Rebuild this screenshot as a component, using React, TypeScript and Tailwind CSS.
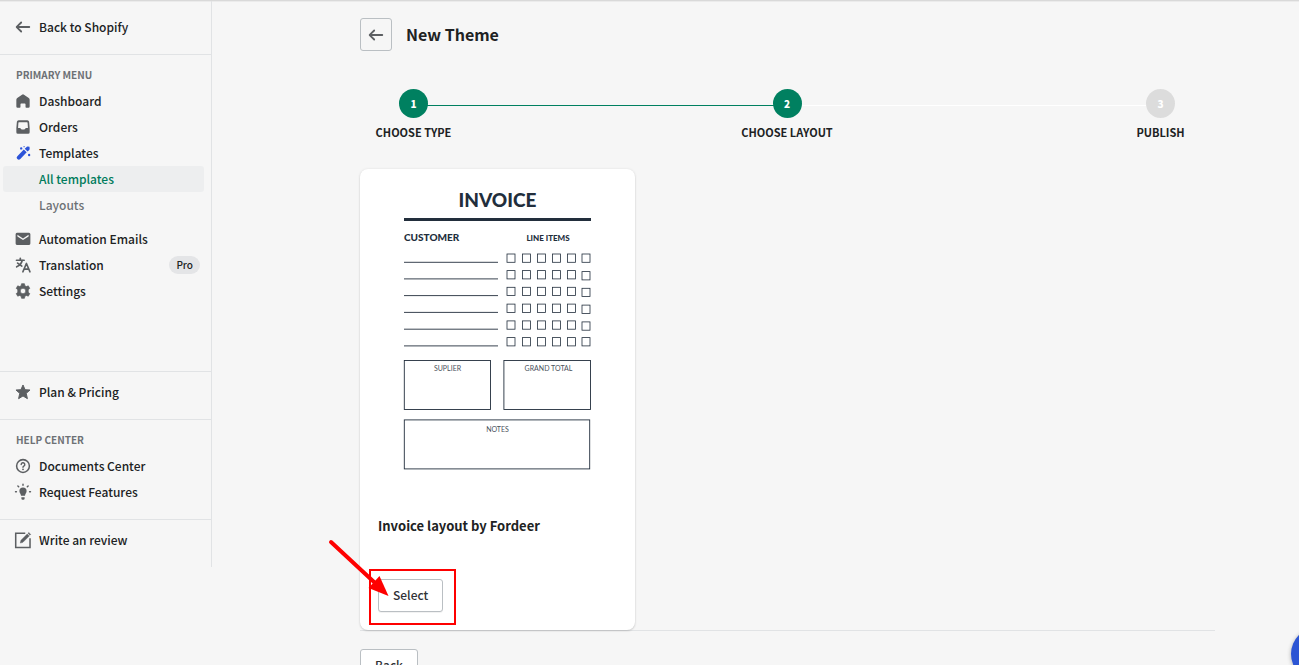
import type { ReactNode } from "react";

function Icon({ children, className = "text-[#5c5f62]" }: { children: ReactNode; className?: string }) {
  return (
    <svg viewBox="0 0 20 20" className={`size-[18px] shrink-0 overflow-visible ${className}`} fill="currentColor" aria-hidden="true">
      {children}
    </svg>
  );
}

const arrowLeft = (
  <path d="M17 9H5.414l3.293-3.293a.999.999 0 1 0-1.414-1.414l-5 5a.999.999 0 0 0 0 1.414l5 5a.997.997 0 0 0 1.414 0 .999.999 0 0 0 0-1.414L5.414 11H17a1 1 0 1 0 0-2z" />
);
const home = (
  <path d="M8.900 3a2 2 0 0 1 2.200 0l5.300 3.800A2.400 2.400 0 0 1 17.400 8.700v7.300a1.400 1.400 0 0 1-1.400 1.400h-2.400a.8.800 0 0 1-.8-.8v-3a.8.800 0 0 0-.8-.8H8a.8.800 0 0 0-.8.800v3a.8.800 0 0 1-.8.800H4a1.400 1.400 0 0 1-1.400-1.400V8.700a2.400 2.400 0 0 1 1-1.900z" />
);
const inbox = (
  <path fillRule="evenodd" d="M5.200 2.600h9.600a2 2 0 0 1 2 1.700l.6 6.700v4.700a1.700 1.700 0 0 1-1.700 1.700H4.300a1.700 1.700 0 0 1-1.700-1.700V11l.6-6.700A2 2 0 0 1 5.200 2.600zm.300 2.100a.6.600 0 0 0-.6.600L4.500 11h2c.6 0 .8.300 1.100.9.300.6.600.900 1.200.9h2.400c.6 0 .9-.3 1.200-.9.300-.6.500-.9 1.100-.9h2l-.4-5.700a.6.600 0 0 0-.6-.6z" />
);
const wand = (
  <>
    <path d="M10.900 6.100l3.200 3.200-7.100 7.500a2.300 2.300 0 0 1-3.300-3.300zM11.900 5.200l1.800-1.700a2 2 0 0 1 1.500-.6l2 .2.200 1.900a2 2 0 0 1-.5 1.600l-1.800 1.800z" />
    <circle cx="8" cy="4.900" r="1.300" />
    <circle cx="16.800" cy="12.200" r="1.300" />
    <circle cx="11.200" cy="3" r=".7" />
  </>
);
const mail = (
  <path fillRule="evenodd" d="M3.300 3h13.400A1.600 1.600 0 0 1 18.200 4.600v10.500a1.600 1.600 0 0 1-1.500 1.600H3.300a1.600 1.600 0 0 1-1.500-1.600V4.600A1.600 1.600 0 0 1 3.300 3zm.5 2.400v1.700l6.200 4 6.200-4V5.400L10 9.400z" />
);
const translate = (
  <g fill="none" stroke="currentColor" strokeWidth="1.900" strokeLinecap="round" strokeLinejoin="round">
    <path d="M2.800 4.700h8.400M7 2.500v2.200M9.200 4.700c-.7 3-3 5.800-6.200 7.300M4 7.900l4.700 3.300" />
    <path d="M9.900 17.500l3.900-9.200 3.900 9.200M11.300 14.600h5" />
  </g>
);
const gear = (
  <path fillRule="evenodd" d="M8.400 1.900h3.200l.5 2.300 1.500.9 2.300-.8 1.600 2.800-1.700 1.500v2.800l1.700 1.500-1.600 2.800-2.300-.8-1.500.9-.5 2.300H8.400l-.5-2.300-1.500-.9-2.300.8-1.600-2.800 1.700-1.500V8.600L2.500 7.100l1.600-2.800 2.300.8 1.500-.9zM10 6.900a3.100 3.100 0 1 0 0 6.200 3.100 3.100 0 0 0 0-6.200z" stroke="currentColor" strokeWidth=".8" strokeLinejoin="round" />
);
const star = (
  <path d="M10 2.200l2.300 5.200 5.500.4-4.200 3.700 1.300 5.900L10 14.400l-4.900 3 1.300-5.900-4.200-3.700 5.500-.4z" stroke="currentColor" strokeWidth="1.100" strokeLinejoin="round" />
);
const question = (
  <>
    <circle cx="10" cy="10" r="7.100" fill="none" stroke="currentColor" strokeWidth="1.700" />
    <path d="M8 8.300a2 2 0 1 1 2.900 1.800c-.6.300-.9.600-.9 1.200" fill="none" stroke="currentColor" strokeWidth="1.600" strokeLinecap="round" />
    <circle cx="10" cy="13.700" r="1" />
  </>
);
const bulb = (
  <>
    <path d="M10 5a4 4 0 0 1 4 4c0 2-1.300 2.700-1.700 4.800a.7.700 0 0 1-.7.500H8.400a.7.700 0 0 1-.7-.5C7.300 11.700 6 11 6 9a4 4 0 0 1 4-4zM8.200 15.800h3.600v1.300a1.500 1.500 0 0 1-1.500 1.500h-.6a1.500 1.500 0 0 1-1.500-1.500z" />
    <path d="M10 1.400v1.100M4.300 3.300l.9.900M15.700 3.300l-.9.900M1.700 9.700h1M17.300 9.700h1" stroke="currentColor" strokeWidth="1.600" strokeLinecap="round" />
  </>
);
const compose = (
  <>
    <path d="M12.500 2.600H1.900v15.800h15.900V8" fill="none" stroke="currentColor" strokeWidth="1.700" />
    <path d="M7 13.400l.7-3 7-7 2.200 2.200-7 7zM15.500 2.500l.9-.9 2.200 2.200-.9.900z" stroke="currentColor" strokeWidth=".5" />
  </>
);

function NavItem({ icon, label, badge, iconClass }: { icon: ReactNode; label: string; badge?: string; iconClass?: string }) {
  return (
    <li>
      <a href="#" className="flex h-[26px] items-center gap-[7px] pr-[11px] pl-[14px]">
        <Icon className={iconClass}>{icon}</Icon>
        <span className="flex-1">{label}</span>
        {badge && <span className="rounded-full bg-[#e4e5e7] px-[7px] text-[10px] leading-[18px]">{badge}</span>}
      </a>
    </li>
  );
}

function Sidebar() {
  return (
    <aside className="w-[212px] shrink-0 self-start border-r border-[#e1e3e5] text-[12px] leading-[20px] font-medium">
      <div className="border-b border-[#e1e3e5] pt-[13px] pb-[14px]">
        <ul>
          <NavItem icon={arrowLeft} label="Back to Shopify" />
        </ul>
      </div>
      <nav aria-label="Primary menu" className="border-b border-[#e1e3e5] pt-[12px] pb-[67px]">
        <h2 className="px-4 text-[10px] leading-[16px] font-bold text-[#6d7175]">PRIMARY MENU</h2>
        <ul className="mt-[5px]">
          <NavItem icon={home} label="Dashboard" />
          <NavItem icon={inbox} label="Orders" />
          <NavItem icon={wand} label="Templates" iconClass="text-[#2c53d8]" />
          <li>
            <ul className="mb-[8px]">
              <li className="mr-[7px] ml-[3px]">
                <a href="#" aria-current="page" className="flex h-[26px] items-center rounded-[3px] bg-[#edeeef] pl-[36px] text-[#007b5c]">
                  All templates
                </a>
              </li>
              <li>
                <a href="#" className="flex h-[26px] items-center pl-[39px] text-[#6d7175]">
                  Layouts
                </a>
              </li>
            </ul>
          </li>
          <NavItem icon={mail} label="Automation Emails" />
          <NavItem icon={translate} label="Translation" badge="Pro" />
          <NavItem icon={gear} label="Settings" />
        </ul>
      </nav>
      <ul className="border-b border-[#e1e3e5] pt-[7px] pb-[14px]">
        <NavItem icon={star} label="Plan & Pricing" />
      </ul>
      <nav aria-label="Help center" className="border-b border-[#e1e3e5] pt-[12px] pb-[14px]">
        <h2 className="px-4 text-[10px] leading-[16px] font-bold text-[#6d7175]">HELP CENTER</h2>
        <ul className="mt-[5px]">
          <NavItem icon={question} label="Documents Center" />
          <NavItem icon={bulb} label="Request Features" />
        </ul>
      </nav>
      <ul className="pt-[7px] pb-[14px]">
        <NavItem icon={compose} label="Write an review" />
      </ul>
    </aside>
  );
}

function Step({ number, label, done }: { number: number; label: string; done: boolean }) {
  return (
    <li className="z-10 flex w-[107px] shrink-0 flex-col items-center">
      <span className={`flex size-[29px] items-center justify-center rounded-full text-[10px] leading-[16px] font-black text-white ${done ? "bg-[#008060]" : "bg-[#dcdcdc]"}`}>
        {number}
      </span>
      <span className="mt-1 text-[11px] leading-[20px] font-bold whitespace-nowrap">{label}</span>
    </li>
  );
}

const lineRows = [262.3, 278.900, 295.6, 312.4, 329.200, 345.900];
const boxColumns = [507, 522.500, 537.500, 552.500, 567.500, 582];

function InvoicePreview() {
  return (
    <svg viewBox="403 179 189 292" className="mx-auto block h-[292px] w-[189px] font-['Lato',sans-serif]" fill="#222e3c" role="img" aria-label="Invoice layout preview">
      <text x="497.500" y="206.500" textAnchor="middle" className="text-[19px] font-black">INVOICE</text>
      <path d="M404 219.500h187" stroke="#222e3c" strokeWidth="3" />
      <text x="404" y="241" className="text-[10px] font-black">CUSTOMER</text>
      <text x="548" y="241" textAnchor="middle" className="text-[8px] font-black">LINE ITEMS</text>
      <g fill="none" stroke="#222e3c">
        {lineRows.map((y) => (
          <path key={y} d={`M404 ${y}h94`} strokeWidth=".9" />
        ))}
        {lineRows.map((y, row) =>
          boxColumns.map((x, column) => (
            <rect key={`${y}-${x}`} x={x} y={y - 8.300 + (column === 5 && row > 0 && row < 5 ? 1 : 0)} width="8" height="8.300" strokeWidth=".8" />
          )),
        )}
        <rect x="404.300" y="360.500" width="86.200" height="49" strokeWidth=".9" />
        <rect x="503.900" y="360.500" width="86.600" height="49" strokeWidth=".9" />
        <rect x="404.300" y="419.900" width="185.400" height="49" strokeWidth=".9" />
      </g>
      <g fill="#4a525c" textAnchor="middle" className="text-[7px]">
        <text x="447.500" y="371">SUPLIER</text>
        <text x="548.500" y="371">GRAND TOTAL</text>
        <text x="497.500" y="432">NOTES</text>
      </g>
    </svg>
  );
}

const buttonClass = "rounded-[3px] border border-[#babfc3] bg-white px-[14px] pb-[2px] text-[12px] leading-[20px] font-medium text-[#303236] shadow-[0_1px_0_rgba(0,0,0,0.05)]";

export default function App() {
  return (
    <div className="flex min-h-screen border-t border-[#d9d9d9] bg-[#f6f6f6] font-['Noto_Sans_CJK_SC',sans-serif] text-[#202223] shadow-[inset_0_1px_0_#ebebeb]">
      <Sidebar />
      <main className="min-w-0 flex-1 pt-[17px] pr-[84px] pl-[148px]">
        <header className="flex items-center gap-[14px]">
          <button type="button" aria-label="Go back" className="flex h-[33px] w-[32px] items-center justify-center rounded-[3px] border border-[#babfc3]">
            <Icon>{arrowLeft}</Icon>
          </button>
          <h1 className="pb-[2px] text-[16px] leading-[24px] font-bold">New Theme</h1>
        </header>

        <ol className="mt-[38px] mr-px flex">
          <Step number={1} label="CHOOSE TYPE" done />
          <li aria-hidden="true" className="-mx-[40px] mt-[16px] h-px flex-1 bg-[#008060]" />
          <Step number={2} label="CHOOSE LAYOUT" done />
          <li aria-hidden="true" className="-mx-[40px] mt-[16px] h-px flex-1 bg-white" />
          <Step number={3} label="PUBLISH" done={false} />
        </ol>

        <section className="mt-[27px] border-b border-[#e1e3e5]">
          <article className="w-[275px] rounded-lg bg-white pt-[10px] pb-[18px] shadow-[0_0_3px_rgba(23,24,24,0.08),0_1px_2px_rgba(0,0,0,0.14)]">
            <InvoicePreview />
            <div className="px-[18px] pt-[45px]">
              <h2 className="text-[13px] leading-[20px] font-bold">Invoice layout by Fordeer</h2>
              <div className="relative mt-[43px] w-fit">
                <button type="button" className={`block h-[33px] ${buttonClass}`}>
                  Select
                </button>
                <div className="pointer-events-none absolute -top-[10px] -right-[13px] -bottom-[13px] -left-[9px] border-2 border-[#fe0000]" />
                <svg viewBox="0 0 62 58" className="pointer-events-none absolute -top-[40px] -left-[50px] h-[58px] w-[62px]" fill="#fe0000" aria-hidden="true">
                  <path d="M3 3l43 40" stroke="#fe0000" strokeWidth="4" strokeLinecap="round" />
                  <path d="M60.500 57L40.500 49 51.500 37z" />
                </svg>
              </div>
            </div>
          </article>
        </section>

        <button type="button" className={`mt-[18px] h-[33px] ${buttonClass}`}>
          Back
        </button>
      </main>
      <button type="button" aria-label="Open chat" className="fixed -right-[46px] -bottom-[16px] size-[54px] rounded-full bg-[#2c55d4] shadow-[0_1px_4px_rgba(0,0,0,0.3)]" />
    </div>
  );
}
